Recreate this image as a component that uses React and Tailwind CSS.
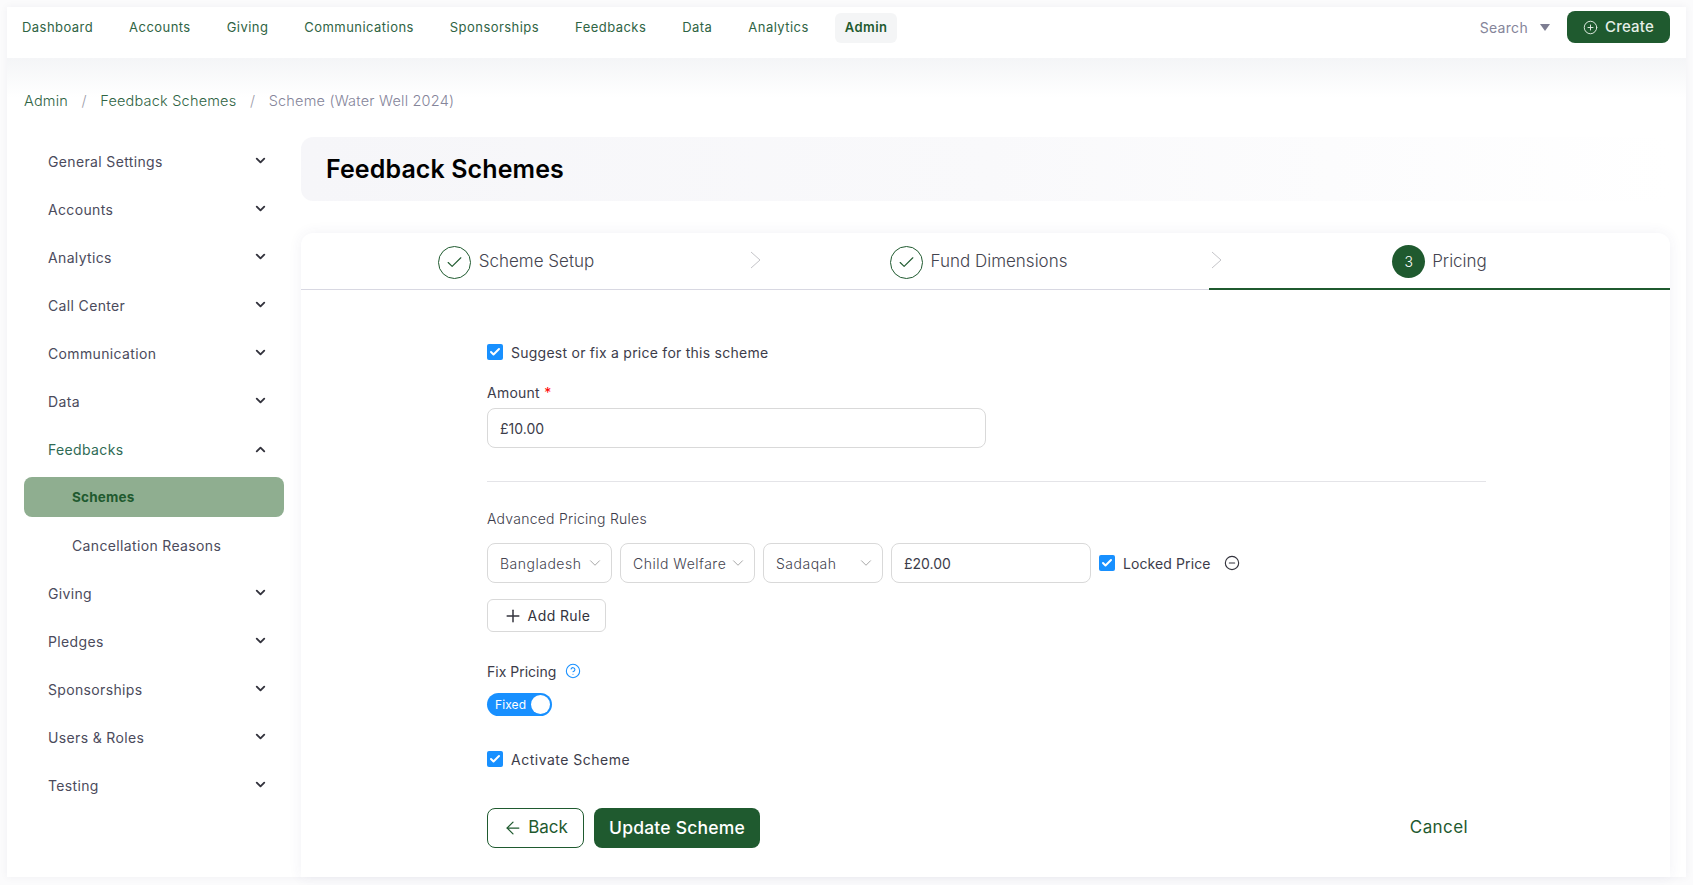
import React from 'react';
import { ArrowLeft, Check, ChevronDown, ChevronUp, CircleHelp, CircleMinus, CirclePlus, Plus } from 'lucide-react';

const topLinks = ['Dashboard', 'Accounts', 'Giving', 'Communications', 'Sponsorships', 'Feedbacks', 'Data', 'Analytics'];
const sideTop = ['General Settings', 'Accounts', 'Analytics', 'Call Center', 'Communication', 'Data'];
const sideBottom = ['Giving', 'Pledges', 'Sponsorships', 'Users & Roles', 'Testing'];

const SideItem = ({ label }) => (
  <div className="flex h-12 items-center justify-between pl-[24px] pr-[16px] text-[14px] tracking-[0.35px] text-[#4b4b5c]">
    <span>{label}</span>
    <ChevronDown size={15} strokeWidth={3} className="mb-[2px] text-[#33333d]" />
  </div>
);

const Tick = () => (
  <span className="flex h-4 w-4 shrink-0 items-center justify-center rounded-[2px] bg-[#1890ff]">
    <Check size={12} strokeWidth={4} className="text-white" />
  </span>
);

const StepArrow = () => (
  <svg className="absolute left-[2px] top-[18px]" width="11" height="18" viewBox="0 0 11 18" fill="none">
    <path d="M1 1l9 8-9 8" stroke="#c4c4c8" strokeWidth="1" />
  </svg>
);

const Done = ({ label }) => (
  <div className="flex items-center gap-2">
    <span className="flex h-[33px] w-[33px] items-center justify-center rounded-full border border-[#1f5a2f]">
      <Check size={19} strokeWidth={1.4} className="text-[#1f5a2f]" />
    </span>
    <span className="text-[17px] font-light text-[#44444f]">{label}</span>
  </div>
);

const Select = ({ label, w }) => (
  <div className={`flex h-10 items-center justify-between rounded-lg border border-[#d9d9d9] pl-3 pr-[7px] text-[14px] font-light tracking-[0.5px] text-[#44444f] ${w}`}>
    <span>{label}</span>
    <ChevronDown size={18} strokeWidth={1} className="text-[#8a8a8a]" />
  </div>
);

export default function App() {
  return (
    <div className="h-[885px] overflow-hidden bg-[#fbfbfc] p-[7px] font-['Inter','Noto_Sans',sans-serif]">
      <div className="h-[870px] bg-white shadow-[0_0_8px_rgba(40,40,80,0.05)]">
        <header className="flex h-[51px] items-start justify-between pl-[5px] pr-[16px] pt-1">
          <nav className="flex items-center gap-4 pt-[2px] text-[13px] tracking-[0.45px] text-[#2f6444]">
            {topLinks.map((x) => (
              <a key={x} className="px-2.5">{x}</a>
            ))}
            <a className="rounded-md bg-[#f4f5f6] px-2.5 py-[5px] font-semibold text-[#1f5a2f]">Admin</a>
          </nav>
          <div className="flex items-center">
            <span className="text-[14px] tracking-[0.3px] text-[#85859a]">Search</span>
            <svg className="ml-[12px] mr-[17px]" width="10" height="7" viewBox="0 0 10 7">
              <path d="M0 0h10L5 7z" fill="#7d7d92" />
            </svg>
            <button className="flex h-8 w-[103px] items-center justify-center gap-[7px] rounded-lg bg-[#1f5a2f] text-[15px] font-medium tracking-[0.2px] text-[#e6efe8]">
              <CirclePlus size={15} strokeWidth={1.5} />
              Create
            </button>
          </div>
        </header>

        <div className="flex h-[79px] items-start gap-[13.5px] bg-gradient-to-b from-[#f4f5f7] from-0% to-white to-50% pl-[17px] pt-[33px] text-[14.5px] font-light leading-5 tracking-[0.2px] text-[#2f6444]">
          <span>Admin</span>
          <span className="text-[#9a9aa8]">/</span>
          <span>Feedback Schemes</span>
          <span className="text-[#9a9aa8]">/</span>
          <span className="text-[#85859a]">Scheme (Water Well 2024)</span>
        </div>

        <div className="flex pl-[17px] pr-[16px]">
          <aside className="w-[260px] shrink-0">
            {sideTop.map((x) => (
              <SideItem key={x} label={x} />
            ))}
            <div className="flex h-12 items-center justify-between pl-[24px] pr-[16px] text-[14px] tracking-[0.35px] text-[#2f6b55]">
              <span>Feedbacks</span>
              <ChevronUp size={15} strokeWidth={3} className="text-[#33333d]" />
            </div>
            <div className="py-1">
              <div className="flex h-10 items-center rounded-lg bg-[#8fae90] pl-12 text-[13.5px] font-bold tracking-[0.2px] text-[#1f5a2f]">Schemes</div>
            </div>
            <div className="flex h-12 items-center pl-12 text-[14px] tracking-[0.35px] text-[#4b4b5c]">Cancellation Reasons</div>
            {sideBottom.map((x) => (
              <SideItem key={x} label={x} />
            ))}
          </aside>

          <main className="ml-[17px] w-[1369px]">
            <div className="flex h-16 items-center rounded-xl bg-gradient-to-r from-[#f6f6f9] via-[#f9f9fb] to-white pl-[25px] pt-[2px] text-[25px] font-semibold tracking-[0.1px] text-black">
              Feedback Schemes
            </div>

            <section className="mt-8 h-[644px] rounded-t-xl bg-white shadow-[0_0_14px_rgba(60,60,120,0.07)]">
              <div className="flex h-[57px] border-b border-[#d8d8e2]">
                <div className="flex w-[447px] items-center justify-center pr-[17px] pt-[2px]">
                  <Done label="Scheme Setup" />
                </div>
                <div className="relative flex w-[461px] items-center justify-center pt-[2px]">
                  <StepArrow />
                  <Done label="Fund Dimensions" />
                </div>
                <div className="relative flex h-[57px] w-[461px] items-center justify-center gap-[7px] border-b-2 border-[#1f5a2f] pt-[2px]">
                  <StepArrow />
                  <span className="flex h-[33px] w-[33px] items-center justify-center rounded-full bg-[#1f5a2f] text-[14px] font-light text-white">3</span>
                  <span className="text-[17px] font-light text-[#44444f]">Pricing</span>
                </div>
              </div>

              <div className="ml-[186px] w-[999px] pt-[51px] text-[14px] text-[#3c3c4a]">
                <label className="flex h-[22px] items-center gap-2 tracking-[0.25px]">
                  <Tick />
                  Suggest or fix a price for this scheme
                </label>

                <div className="mt-[18px] h-[22px] leading-[24px] tracking-[0.25px]">
                  Amount <span className="text-[#ff0000]">*</span>
                </div>
                <div className="mt-[5px] flex h-10 w-[499px] items-center rounded-lg border border-[#d9d9d9] pl-3 text-[#3c3c4a]">£10.00</div>

                <hr className="mt-[33px] border-[#e4e4e8]" />

                <div className="mt-[25px] h-[22px] font-light leading-[24px] tracking-[0.25px]">Advanced Pricing Rules</div>

                <div className="mt-[14px] flex items-center gap-2">
                  <Select label="Bangladesh" w="w-[125px]" />
                  <Select label="Child Welfare" w="w-[135px]" />
                  <Select label="Sadaqah" w="w-[120px]" />
                  <div className="flex h-10 w-[200px] items-center rounded-lg border border-[#d9d9d9] pl-3">£20.00</div>
                  <span><Tick /></span>
                  <span className="tracking-[0.1px]">Locked Price</span>
                  <CircleMinus size={16} strokeWidth={1.7} className="ml-[5px] text-[#33333d]" />
                </div>

                <button className="mt-4 flex h-[33px] w-[119px] items-center justify-center gap-[5px] rounded-md border border-[#d9d9d9] tracking-[0.4px] text-[#33333d]">
                  <Plus size={20} strokeWidth={1.8} />
                  Add Rule
                </button>

                <div className="mt-[28px] flex h-[22px] items-center gap-[9px]">
                  Fix Pricing
                  <CircleHelp size={16} strokeWidth={1.6} className="text-[#1890ff]" />
                </div>

                <div className="mt-[11px] flex h-[23px] w-[65px] items-center justify-between rounded-full bg-[#1890ff] pl-[8px] pr-[2px] text-[12px] tracking-[0.1px] text-white">
                  Fixed
                  <span className="h-[19px] w-[19px] rounded-full bg-white" />
                </div>

                <label className="mt-[32px] flex h-[22px] items-center gap-2 tracking-[0.5px]">
                  <Tick />
                  Activate Scheme
                </label>

                <div className="mt-[38px] flex items-center justify-between pr-[18px]">
                  <div className="flex items-center gap-[10px]">
                    <button className="flex h-10 w-[97px] items-center justify-center gap-[5px] rounded-lg border border-[#1f5a2f] text-[17px] text-[#1f5a2f]">
                      <ArrowLeft size={20} strokeWidth={1.5} />
                      Back
                    </button>
                    <button className="flex h-10 w-[166px] items-center justify-center rounded-lg bg-[#1f5a2f] text-[17.5px] font-medium tracking-[0.2px] text-white">
                      Update Scheme
                    </button>
                  </div>
                  <button className="text-[17px] tracking-[0.4px] text-[#1f5a2f]">Cancel</button>
                </div>
              </div>
            </section>
          </main>
        </div>
      </div>
    </div>
  );
}
